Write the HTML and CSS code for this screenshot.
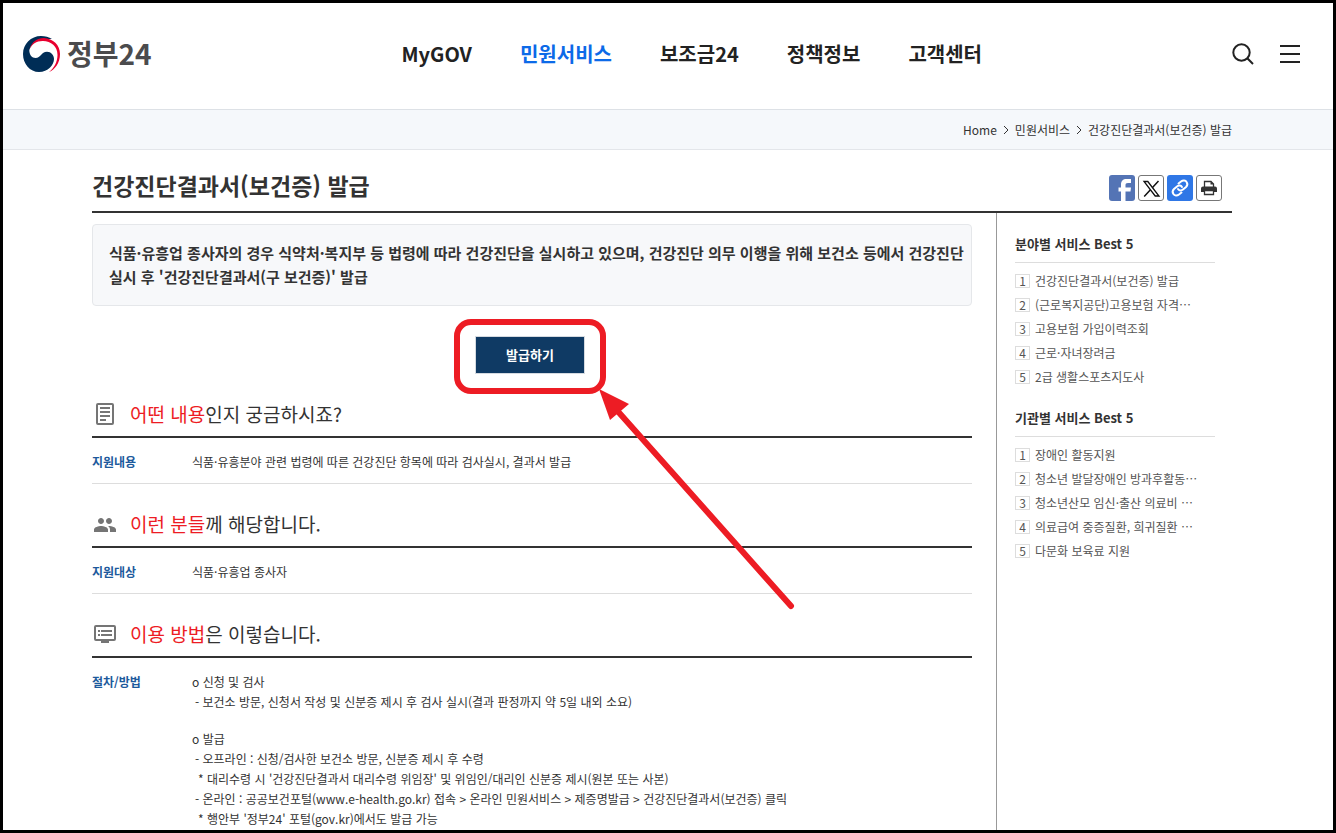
FILE: index.html
```html
<!DOCTYPE html>
<html lang="ko">
<head>
    <meta charset="UTF-8">
    <meta name="viewport" content="width=device-width, initial-scale=1.0">
    <title>건강진단결과서(보건증) 발급 | 정부24</title>
    <link rel="stylesheet" href="styles.css">
</head>
<body>
    <header class="header">
        <a class="logo" href="#">
            <svg class="logo-mark" viewBox="0 0 37 37" aria-hidden="true">
                <path fill="#002d56" d="M29 3C26 1 22 0 18 0C8 0 0 8 0 18C0 28 7 36 16 36C25 36 31 29 31 23C31 19 28 15.700 24 15.700C18 15.700 18 22 12.500 22C9 22 6.300 19 6.300 14C9 6 15 3 21 3Z"/>
                <path fill="#e8002f" d="M6.300 14C9 5 15 1.800 21 2C30 2.500 37 9 37 18C37 27 32 33.500 26 36C31 32 34.500 26 34.500 19C34.500 10 28 5.200 20 5C14 4.800 8.500 8 6.300 14Z"/>
            </svg>
            <span class="logo-text">정부24</span>
        </a>
        <nav class="nav">
            <a href="#">MyGOV</a>
            <a href="#" class="active">민원서비스</a>
            <a href="#">보조금24</a>
            <a href="#">정책정보</a>
            <a href="#">고객센터</a>
        </nav>
        <div class="tools">
            <button type="button" aria-label="검색">
                <svg width="22" height="22" viewBox="0 0 22 22" fill="none" stroke="#222" stroke-width="2">
                    <circle cx="9.500" cy="9.500" r="8.200"/>
                    <path d="M15.300 15.300L21 21"/>
                </svg>
            </button>
            <button type="button" aria-label="전체메뉴">
                <svg width="20" height="22" viewBox="0 0 20 22" fill="none" stroke="#222" stroke-width="2">
                    <path d="M0 3H20M0 11H20M0 19H20"/>
                </svg>
            </button>
        </div>
    </header>

    <div class="location">
        <nav class="wrap breadcrumb">
            <a href="#">Home</a>
            <svg width="6" height="10" viewBox="0 0 6 10"><path d="M1 1L5 5L1 9"/></svg>
            <a href="#">민원서비스</a>
            <svg width="6" height="10" viewBox="0 0 6 10"><path d="M1 1L5 5L1 9"/></svg>
            <a href="#">건강진단결과서(보건증) 발급</a>
        </nav>
    </div>

    <div class="wrap page">
        <div class="title-bar">
            <h1>건강진단결과서(보건증) 발급</h1>
            <div class="share">
                <button type="button" class="share-btn facebook" aria-label="페이스북">
                    <svg viewBox="0 0 26 26"><path fill="#fff" d="M12 26V16.500H9.500V12.500H12V9.500C12 6 14 4 17.500 4H22V8H19C17 8 16.500 8.700 16.500 10V12.500H22L21.500 16.500H16.500V26Z"/></svg>
                </button>
                <button type="button" class="share-btn outline" aria-label="X">
                    <svg viewBox="0 0 26 26" fill="none" stroke="#111"><path stroke-width="1.300" d="M6 6.500H9.800L21 21H17.200Z"/><path stroke-width="1.500" d="M20.500 6L14.300 12.800M12.200 15L6.200 21.500"/></svg>
                </button>
                <button type="button" class="share-btn link" aria-label="링크 복사">
                    <svg viewBox="0 0 26 26" fill="none" stroke="#fff" stroke-width="2" stroke-linecap="round">
                        <path d="M11.500 8.500L14 6.500C16 5 18.500 5.300 19.600 7C20.900 8.900 20.400 10.600 19 12L16 14.600C14.400 16 12 15.700 11 14"/>
                        <path d="M14.500 17.500L12 19.500C10 21 7.500 20.700 6.400 19C5.100 17.100 5.600 15.400 7 14L10 11.400C11.600 10 14 10.300 15 12"/>
                    </svg>
                </button>
                <button type="button" class="share-btn outline" aria-label="인쇄">
                    <svg viewBox="0 0 26 26">
                        <path fill="#fff" stroke="#333" stroke-width="1.300" d="M8.500 12V6.500H15L17.500 9V12"/>
                        <path fill="#333" d="M14.500 6V9.500H18ZM7 11.500H19Q21 11.500 21 13.500V17H5V13.500Q5 11.500 7 11.500Z"/>
                        <path fill="#fff" stroke="#333" stroke-width="1.300" d="M8.500 15.500H17.500V19.500H8.500Z"/>
                    </svg>
                </button>
            </div>
        </div>

        <div class="columns">
            <main class="content">
                <p class="summary">식품·유흥업 종사자의 경우 식약처·복지부 등 법령에 따라 건강진단을 실시하고 있으며, 건강진단 의무 이행을 위해 보건소 등에서 건강진단 실시 후 '건강진단결과서(구 보건증)' 발급</p>

                <div class="apply">
                    <div class="apply-box">
                        <button type="button" class="apply-btn">발급하기</button>
                        <!-- 강조 표시 -->
                        <svg class="marker" width="346" height="296" viewBox="0 0 346 296" aria-hidden="true">
                            <rect x="3" y="3" width="146" height="69" rx="14" fill="none" stroke="#ed1c24" stroke-width="6"/>
                            <path d="M160 88L337 287" stroke="#ed1c24" stroke-width="6" stroke-linecap="round"/>
                            <path d="M145 70L175 85L156 101Z" fill="#ed1c24"/>
                        </svg>
                    </div>
                </div>

                <section class="section">
                    <h2>
                        <svg width="24" height="24" viewBox="0 0 24 24">
                            <rect x="4" y="2" width="16" height="20" rx="1" fill="none" stroke="#757575" stroke-width="2"/>
                            <path stroke="#757575" stroke-width="2" d="M7 6H17M7 10H17M7 14H17M7 18H13"/>
                        </svg>
                        <span><em>어떤 내용</em>인지 궁금하시죠?</span>
                    </h2>
                    <dl class="row">
                        <dt>지원내용</dt>
                        <dd>식품·유흥분야 관련 법령에 따른 건강진단 항목에 따라 검사실시, 결과서 발급</dd>
                    </dl>
                </section>

                <section class="section">
                    <h2>
                        <svg width="24" height="24" viewBox="0 -1 24 24" fill="#757575">
                            <path d="M16 11c1.660 0 2.990-1.340 2.990-3S17.660 5 16 5s-3 1.340-3 3 1.340 3 3 3zm-8 0c1.660 0 2.990-1.340 2.990-3S9.660 5 8 5 5 6.340 5 8s1.340 3 3 3zm0 2c-2.330 0-7 1.170-7 3.500V19h14v-2.500c0-2.330-4.670-3.500-7-3.500zm8 0c-.29 0-.62.02-.97.05 1.160.84 1.970 1.970 1.970 3.450V19h6v-2.500c0-2.330-4.670-3.500-7-3.500z"/>
                        </svg>
                        <span><em>이런 분들</em>께 해당합니다.</span>
                    </h2>
                    <dl class="row">
                        <dt>지원대상</dt>
                        <dd>식품·유흥업 종사자</dd>
                    </dl>
                </section>

                <section class="section">
                    <h2>
                        <svg width="24" height="24" viewBox="0 0 24 24">
                            <rect x="2" y="4" width="20" height="14" rx="1" fill="none" stroke="#757575" stroke-width="2"/>
                            <path fill="#757575" d="M8 18H16V21H8ZM5 8H7V10H5ZM8 8H19V10H8ZM5 12H7V14H5ZM8 12H19V14H8Z"/>
                        </svg>
                        <span><em>이용 방법</em>은 이렇습니다.</span>
                    </h2>
                    <dl class="row">
                        <dt>절차/방법</dt>
                        <dd>
                            <ul class="steps">
                                <li>o 신청 및 검사</li>
                                <li class="dash">- 보건소 방문, 신청서 작성 및 신분증 제시 후 검사 실시(결과 판정까지 약 5일 내외 소요)</li>
                            </ul>
                            <ul class="steps">
                                <li>o 발급</li>
                                <li class="dash">- 오프라인 : 신청/검사한 보건소 방문, 신분증 제시 후 수령</li>
                                <li class="note">* 대리수령 시 '건강진단결과서 대리수령 위임장' 및 위임인/대리인 신분증 제시(원본 또는 사본)</li>
                                <li class="dash">- 온라인 : 공공보건포털(www.e-health.go.kr) 접속 &gt; 온라인 민원서비스 &gt; 제증명발급 &gt; 건강진단결과서(보건증) 클릭</li>
                                <li class="note">* 행안부 '정부24' 포털(gov.kr)에서도 발급 가능</li>
                            </ul>
                        </dd>
                    </dl>
                </section>
            </main>

            <aside class="side">
                <h3>분야별 서비스 Best 5</h3>
                <ol class="best">
                    <li><span class="rank">1</span><a href="#">건강진단결과서(보건증) 발급</a></li>
                    <li><span class="rank">2</span><a href="#">(근로복지공단)고용보험 자격…</a></li>
                    <li><span class="rank">3</span><a href="#">고용보험 가입이력조회</a></li>
                    <li><span class="rank">4</span><a href="#">근로·자녀장려금</a></li>
                    <li><span class="rank">5</span><a href="#">2급 생활스포츠지도사</a></li>
                </ol>
                <h3>기관별 서비스 Best 5</h3>
                <ol class="best">
                    <li><span class="rank">1</span><a href="#">장애인 활동지원</a></li>
                    <li><span class="rank">2</span><a href="#">청소년 발달장애인 방과후활동…</a></li>
                    <li><span class="rank">3</span><a href="#">청소년산모 임신·출산 의료비 …</a></li>
                    <li><span class="rank">4</span><a href="#">의료급여 중증질환, 희귀질환 …</a></li>
                    <li><span class="rank">5</span><a href="#">다문화 보육료 지원</a></li>
                </ol>
            </aside>
        </div>
    </div>
</body>
</html>
```

FILE: styles.css
```css
:root {
    --text-color: #333;
    --line-color: #333;
    --point-color: #ed1c24;
    --label-color: #1d5a9c;
}
* {
    box-sizing: border-box;
}
body {
    font-family: "Noto Sans CJK KR", "Noto Sans", sans-serif;
    font-size: 12px;
    line-height: 20px;
    color: var(--text-color);
    background-color: #fff;
    margin: 0;
    min-height: 100vh;
    border: 3px solid #000;
    display: flex;
    flex-direction: column;
    word-break: keep-all;
}
h1, h2, h3, p, ul, ol, dl, dd {
    margin: 0;
    padding: 0;
}
ul, ol {
    list-style: none;
}
a {
    color: inherit;
    text-decoration: none;
}
button {
    font-family: inherit;
    padding: 0;
    border: none;
    background: none;
    cursor: pointer;
}
svg {
    display: block;
    flex: none;
}
.header {
    display: flex;
    justify-content: space-between;
    align-items: center;
    height: 107px;
    padding: 0 33px 4px 20px;
    border-bottom: 1px solid #dde1e6;
}
.logo {
    display: flex;
    align-items: center;
    gap: 7px;
}
.logo-mark {
    width: 37px;
    height: 37px;
}
.logo-text {
    font-size: 28px;
    line-height: 36px;
    font-weight: bold;
    color: #4b4b4d;
    padding-bottom: 2px;
}
.nav {
    display: flex;
    gap: 48px;
    font-size: 20px;
    line-height: 30px;
    font-weight: bold;
    color: #222;
}
.nav .active {
    color: #0c6ae8;
}
.tools {
    display: flex;
    align-items: center;
    gap: 26px;
}
.location {
    background-color: #f5f8fb;
    border-bottom: 1px solid #e3e6ea;
    padding-right: 12px;
}
.wrap {
    width: 100%;
    max-width: 1140px;
    margin: 0 auto;
}
.breadcrumb {
    display: flex;
    justify-content: flex-end;
    align-items: center;
    gap: 6px;
    height: 39px;
}
.breadcrumb svg {
    fill: none;
    stroke: #333;
}
.page {
    max-width: 1152px;
    padding-right: 12px;
    flex: 1;
    display: flex;
    flex-direction: column;
}
.title-bar {
    display: flex;
    justify-content: space-between;
    align-items: flex-end;
    height: 63px;
    padding: 0 10px 10px 0;
    border-bottom: 2px solid var(--line-color);
}
h1 {
    font-size: 23px;
    line-height: 32px;
}
.share {
    display: flex;
    gap: 3px;
}
.share-btn {
    width: 26px;
    height: 26px;
    border-radius: 3px;
    overflow: hidden;
}
.share-btn.facebook {
    background-color: #5474b5;
}
.share-btn.link {
    background-color: #2f77e6;
}
.share-btn.outline {
    border: 1px solid #777;
}
.share-btn.outline svg {
    margin: -1px;
}
.share-btn svg {
    width: 26px;
    height: 26px;
}
.columns {
    flex: 1;
    display: flex;
    gap: 24px;
}
.content {
    flex: 1;
    min-width: 0;
    padding-top: 11px;
}
.summary {
    padding: 16px 4px 16px 16px;
    font-size: 15px;
    line-height: 24px;
    font-weight: bold;
    background-color: #f7f8fa;
    border: 1px solid #e5e7ea;
    border-radius: 4px;
}
.apply {
    display: flex;
    justify-content: center;
    padding: 30px 4px 18px 0;
}
.apply-box {
    position: relative;
}
.apply-btn {
    display: block;
    width: 110px;
    height: 38px;
    padding-bottom: 2px;
    font-size: 13px;
    font-weight: bold;
    color: #fff;
    background-color: #0f3a64;
    border: 1px solid #d5dae0;
}
.marker {
    position: absolute;
    left: -21px;
    top: -17px;
    pointer-events: none;
}
.section + .section {
    margin-top: 18px;
}
.section h2 {
    display: flex;
    align-items: center;
    gap: 13px;
    height: 46px;
    padding-left: 1px;
    font-size: 19px;
    line-height: 28px;
    font-weight: normal;
    border-bottom: 2px solid var(--line-color);
}
.section em {
    font-style: normal;
    color: var(--point-color);
}
.row {
    display: flex;
    padding: 14px 0 11px;
    border-bottom: 1px solid #ddd;
}
.section:last-child .row {
    padding-bottom: 0;
    border-bottom: none;
}
.row dt {
    width: 100px;
    font-weight: bold;
    color: var(--label-color);
}
.row dd {
    flex: 1;
}
.steps + .steps {
    margin-top: 17px;
}
.steps .dash {
    padding-left: 3px;
}
.steps .note {
    padding-left: 6px;
}
.side {
    width: 236px;
    padding: 20px 17px 0 18px;
    border-left: 1px solid #999;
}
.side h3 {
    padding-bottom: 8px;
    font-size: 13px;
    line-height: 21px;
    border-bottom: 1px solid #ddd;
}
.best {
    padding: 6px 0 18px;
    color: #555;
}
.best li {
    display: flex;
    align-items: center;
    gap: 5px;
    height: 24px;
}
.rank {
    width: 15px;
    height: 14px;
    line-height: 12px;
    text-align: center;
    border: 1px solid #ddd;
}
@media (max-width: 900px) {
    .nav {
        display: none;
    }
    .columns {
        flex-direction: column;
    }
    .side {
        width: auto;
        border-left: none;
    }
}
```
